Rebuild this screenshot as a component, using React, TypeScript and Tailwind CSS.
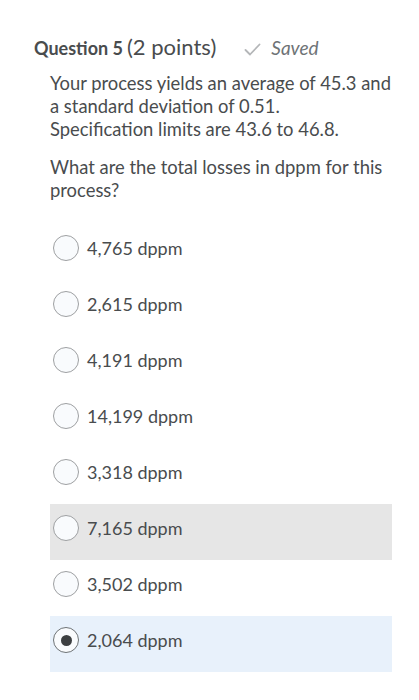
import React from "react";

const options = [
  { label: "4,765 dppm", bg: "" },
  { label: "2,615 dppm", bg: "" },
  { label: "4,191 dppm", bg: "" },
  { label: "14,199 dppm", bg: "" },
  { label: "3,318 dppm", bg: "" },
  { label: "7,165 dppm", bg: "bg-[#e6e6e6]" },
  { label: "3,502 dppm", bg: "" },
  { label: "2,064 dppm", bg: "bg-[#e8f1fb]", selected: true },
];

export default function App() {
  return (
    <div
      className="w-[419px] h-[700px] bg-white text-[#494c4e] pl-[34px] pt-[36px]"
      style={{ fontFamily: "Lato, 'Open Sans', sans-serif" }}
    >
      <div className="flex items-baseline h-[22px] leading-[22px]">
        <span className="font-bold text-[18px]">Question 5</span>
        <span className="text-[22px] ml-[4px]">(2 points)</span>
        <span className="ml-[28px] flex items-baseline text-[#6e7376]">
          <svg width="17" height="13" viewBox="0 0 17 13" className="mr-[10px] self-center translate-y-[1px]">
            <path d="M1.5 7 L6 11.5 L15.5 1.5" fill="none" stroke="#b4b6b8" strokeWidth="1.8" strokeLinecap="round" strokeLinejoin="round" />
          </svg>
          <span className="italic text-[19px]">Saved</span>
        </span>
      </div>

      <div className="ml-[16px] w-[355px] mt-[14px] text-[18.4px] leading-[23px]">
        <p>
          Your process yields an average of 45.3 and
          <br />a standard deviation of 0.51.
          <br />
          Specification limits are 43.6 to 46.8.
        </p>
        <p className="mt-[15px]">What are the total losses in dppm for this process?</p>
      </div>

      <div className="ml-[16px] w-[342px] mt-[22px] flex flex-col">
        {options.map((o) => (
          <div key={o.label} className={`h-[56px] flex items-start pt-[11px] pl-[3px] ${o.bg}`}>
            <div
              className={`w-[26px] h-[26px] rounded-full border flex items-center justify-center bg-[#f9fbfd] ${
                o.selected ? "border-[#6e7376] border-[1.5px]" : "border-[#9ea0a2]"
              }`}
            >
              {o.selected && <div className="w-[11px] h-[11px] rounded-full bg-[#3c3f41]" />}
            </div>
            <span className="ml-[8px] text-[18px] leading-[26px]">{o.label}</span>
          </div>
        ))}
      </div>
    </div>
  );
}
